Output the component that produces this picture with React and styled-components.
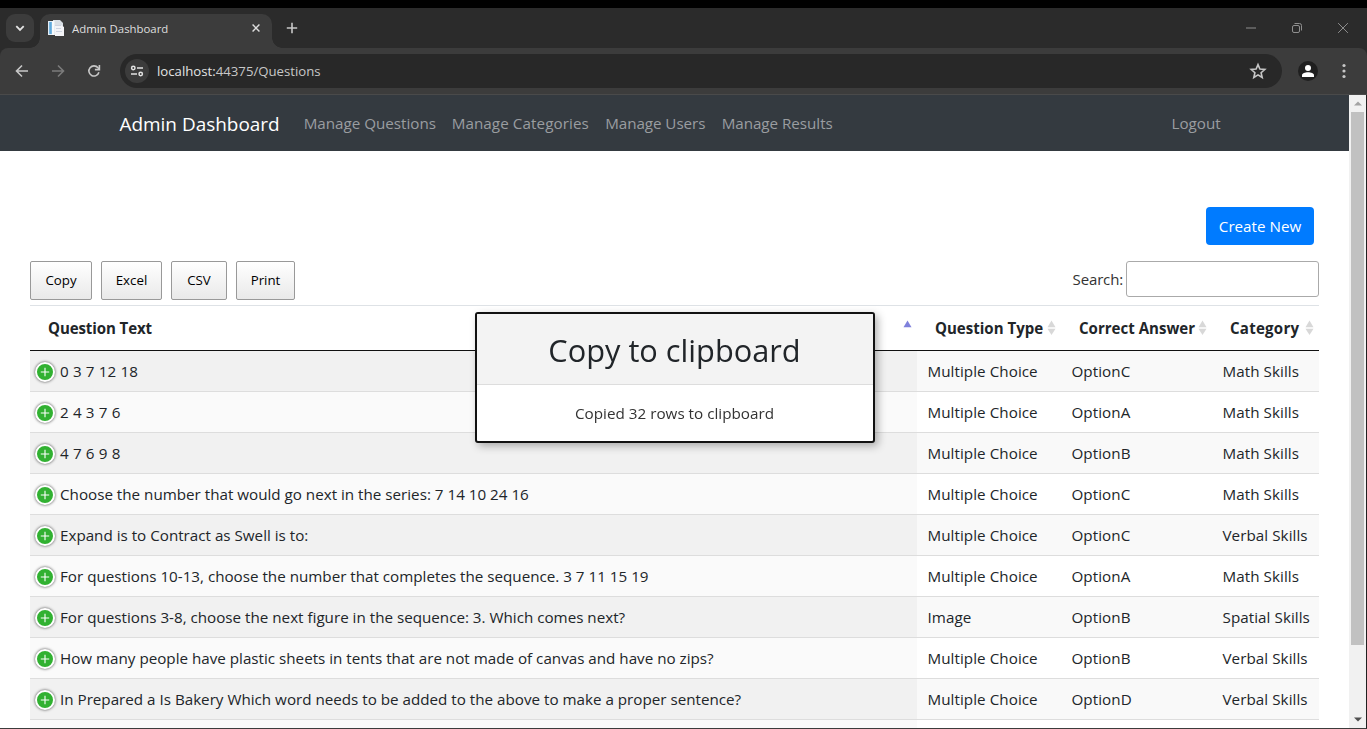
import React from "react";
import styled, { createGlobalStyle, css } from "styled-components";

const Global = createGlobalStyle`
  *, *::before, *::after { box-sizing: border-box; }
  html, body { margin: 0; height: 100%; overflow: hidden; background: #fff; }
  body { font-family: "Open Sans", "Noto Sans", sans-serif; font-size: 15.2px; color: #212529; }
`;

const Window = styled.div`
  width: 1367px;
  height: 729px;
  display: flex;
  flex-direction: column;
  overflow: hidden;
  background: #fff;
  border-top: 8px solid #000;
`;

/* ---------- browser chrome ---------- */

const TabStrip = styled.div`
  height: 40px;
  flex: none;
  display: flex;
  align-items: flex-end;
  background: #2b2b2b;
  padding-left: 6px;
`;

const TabSearch = styled.div`
  width: 28px;
  height: 28px;
  margin: 0 6px 6px 0;
  border-radius: 9px;
  background: #3c3c3c;
  display: grid;
  place-items: center;
`;

const Tab = styled.div`
  position: relative;
  width: 232px;
  height: 34px;
  display: flex;
  align-items: center;
  padding: 0 11px 6px 8px;
  border-radius: 10px 10px 0 0;
  background: #3c3c3c;
  color: #dedede;
  font-size: 11.4px;

  &::before, &::after {
    content: "";
    position: absolute;
    bottom: 0;
    width: 10px;
    height: 10px;
  }
  &::before { left: -10px; background: radial-gradient(circle at 0 0, transparent 9.5px, #3c3c3c 10px); }
  &::after { right: -10px; background: radial-gradient(circle at 100% 0, transparent 9.5px, #3c3c3c 10px); }
`;

const TabTitle = styled.span`
  flex: 1;
  margin-left: 8px;
  padding-top: 1px;
  line-height: 16px;
`;

const NewTab = styled.div`
  width: 28px;
  height: 28px;
  margin: 0 0 6px 6px;
  display: grid;
  place-items: center;
`;

const WindowControls = styled.div`
  margin-left: auto;
  display: flex;
  height: 40px;
  padding-right: 1px;
`;

const Control = styled.div`
  width: 46px;
  display: grid;
  place-items: center;
`;

const ToolbarBack = styled.div`
  flex: none;
  background: #2b2b2b;
`;

const Toolbar = styled.div`
  height: 47px;
  display: flex;
  align-items: center;
  background: #3c3c3c;
  border-bottom: 1px solid #4a4a4a;
  border-radius: 8px 8px 0 0;
  padding: 0 5px 0 4px;
`;

const ToolButton = styled.div`
  width: 36px;
  height: 34px;
  display: grid;
  place-items: center;
`;

const Omnibox = styled.div`
  flex: 1;
  height: 34px;
  margin: 0 8px 0 8px;
  padding: 0 12px 0 5px;
  display: flex;
  align-items: center;
  justify-content: space-between;
  border-radius: 17px;
  background: #282828;
`;

const Address = styled.div`
  display: flex;
  align-items: center;
  gap: 8px;
  font-size: 13.2px;
  line-height: 18px;
  color: #c7c7c7;
  b { font-weight: 400; color: #e3e3e3; }
`;

const SiteInfo = styled.span`
  width: 24px;
  height: 24px;
  border-radius: 50%;
  background: #3c3c3c;
  display: grid;
  place-items: center;
`;

const Avatar = styled.div`
  width: 20px;
  height: 20px;
  margin: 0 8px;
  border-radius: 50%;
  background: #1f1f1f;
  display: grid;
  place-items: center;
`;

/* ---------- page ---------- */

const Viewport = styled.div`
  flex: 1;
  min-height: 0;
  display: flex;
  border-right: 1px solid #202020;
  border-bottom: 1px solid #3c3c3c;
`;

const Page = styled.main`
  flex: 1;
  min-width: 0;
  overflow: hidden;
`;

const Navbar = styled.nav`
  height: 56px;
  display: flex;
  align-items: center;
  padding: 0 120.5px 0 119.5px;
  background: #343a40;
`;

const Brand = styled.a`
  margin-right: 16px;
  padding-top: 2px;
  font-size: 18.95px;
  color: #fff;
`;

const NavLink = styled.a`
  padding: 0 8px;
  color: #9a9da0;
  width: ${(p) => p.$width}px;
  letter-spacing: ${(p) => p.$track || 0}px;
  white-space: nowrap;
  ${(p) => p.$end && css`margin-left: auto;`}
`;

const Content = styled.section`
  padding: 56px 30px 0;
`;

const Actions = styled.div`
  display: flex;
  justify-content: flex-end;
  padding-right: 5px;
`;

const PrimaryButton = styled.button`
  width: 108px;
  height: 38px;
  padding: 0;
  border: 0;
  border-radius: 4px;
  background: #007bff;
  color: #fff;
  font: inherit;
`;

const TableTools = styled.div`
  display: flex;
  justify-content: space-between;
  align-items: flex-start;
  height: 44px;
  margin-top: 16px;
`;

const ExportButtons = styled.div`
  display: flex;
  gap: 9px;
`;

const ExportButton = styled.button`
  width: ${(p) => p.$width}px;
  height: 39px;
  padding: 0 0 1px;
  border: 1px solid #999;
  border-radius: 2px;
  background: linear-gradient(to bottom, #fff 0%, #e9e9e9 100%);
  color: #000;
  font-family: inherit;
  font-size: 13.3px;
`;

const Search = styled.label`
  display: flex;
  align-items: center;
  gap: 3px;
  color: #333;
  font-size: 15px;
  letter-spacing: -0.15px;
`;

const SearchInput = styled.input`
  width: 193px;
  height: 36px;
  border: 1px solid #aaa;
  border-radius: 3px;
  background: transparent;
`;

const Table = styled.table`
  width: 1289px;
  table-layout: fixed;
  border-collapse: separate;
  border-spacing: 0;
  border-top: 1px solid #dee2e6;
`;

const Col = styled.col`
  width: ${(p) => p.$width}px;
`;

const HeadCell = styled.th`
  height: 45px;
  padding: 0 0 0 18px;
  border-bottom: 1px solid #111;
  text-align: left;
  font-size: 15.05px;
  letter-spacing: ${(p) => p.$track || 0}px;
  white-space: nowrap;
`;

const HeadInner = styled.div`
  display: flex;
  align-items: center;
  justify-content: space-between;
  padding-right: 5px;
  line-height: 20px;
`;

const BodyRow = styled.tr`
  --plain: #fff;
  --sorted: #fafafa;
  &:nth-child(odd) {
    --plain: #f9f9f9;
    --sorted: #f1f1f1;
  }
`;

const Cell = styled.td`
  height: 41px;
  padding: 0 0 0 10.5px;
  border-bottom: 1px solid #ddd;
  background: var(--plain);
  line-height: 24px;
  letter-spacing: 0.06px;
  white-space: nowrap;
`;

const QuestionCell = styled(Cell)`
  padding-left: 5px;
  background: var(--sorted);
  letter-spacing: ${(p) => p.$track || 0}px;
`;

const Question = styled.div`
  display: flex;
  align-items: center;
  gap: 5px;
`;

const Expand = styled.span`
  width: 20px;
  height: 20px;
  margin-top: 1px;
  border: 2px solid #fff;
  border-radius: 50%;
  background: #31b131;
  box-shadow: 0 0 3px #444;
  display: grid;
  place-items: center;
`;

/* ---------- scroll bar ---------- */

const ScrollBar = styled.div`
  width: 17px;
  display: flex;
  flex-direction: column;
  align-items: center;
  background: #f1f1f1;
`;

const ScrollArrow = styled.div`
  height: 17px;
  display: grid;
  place-items: center;
`;

const ScrollThumb = styled.div`
  width: 13px;
  height: 533px;
  margin-bottom: auto;
  background: #c1c1c1;
`;

/* ---------- notice ---------- */

const Notice = styled.div`
  position: fixed;
  top: 312px;
  left: 475px;
  width: 400px;
  height: 131px;
  border: 2px solid #111;
  border-radius: 3px;
  background: #fff;
  box-shadow: 3px 3px 8px rgba(0, 0, 0, 0.3);
  text-align: center;
  overflow: hidden;
`;

const NoticeTitle = styled.h2`
  height: 71px;
  margin: 0;
  padding: 1px 1px 0 0;
  border-bottom: 1px solid #ddd;
  background: #f3f3f3;
  font-size: 30.75px;
  font-weight: 400;
  line-height: 70px;
`;

const NoticeText = styled.div`
  padding-right: 1px;
  font-size: 15.25px;
  line-height: 57px;
  color: #333;
`;

/* ---------- drawings ---------- */

const Stroke = ({ d, w = 16, color = "#c7c7c7", sw = 1.6 }) => (
  <svg width={w} height={w} viewBox="0 0 16 16" fill="none" stroke={color} strokeWidth={sw}>
    <path d={d} />
  </svg>
);

const Favicon = () => (
  <svg width="16" height="16" viewBox="0 0 16 16">
    <path d="M0 1h5v14H0z" fill="#e4eef6" />
    <path d="M1.200 2h2.600v12H1.200z" fill="#5fa9dc" />
    <path d="M5 0h7l3 3v12H5z" fill="#d9dfe5" />
    <path d="M4 1h2.500v14H4z" fill="#f7fafc" />
    <path d="M7 5h6l3 2v9H7z" fill="#f3f4f7" />
    <path d="M7 5.500h6M8 8.500h5M8 11.500h6" stroke="#cdd3e0" strokeWidth="1" />
  </svg>
);

const SortIcon = ({ active }) => (
  <svg width="9" height="16" viewBox="0 0 9 16">
    <path d="M4.5 0.5L8.5 7.3h-8z" fill={active ? "#7f81dc" : "#d8d8d8"} />
    {!active && <path d="M4.5 15L.5 8.7h8z" fill="#d8d8d8" />}
  </svg>
);

const Triangle = ({ down }) => (
  <svg width="8" height="5" viewBox="0 0 8 5">
    <path d={down ? "M0 .5h8L4 4.5z" : "M0 4.5h8L4 .5z"} fill={down ? "#505050" : "#a3a3a3"} />
  </svg>
);

/* ---------- data ---------- */

const NAV = [
  ["Manage Questions", 148, 0],
  ["Manage Categories", 153.5, 0.09],
  ["Manage Users", 116.5, -0.05],
  ["Manage Results", 127, -0.03],
];

const EXPORTS = [["Copy", 62], ["Excel", 61], ["CSV", 56], ["Print", 59]];

const HEADINGS = [
  ["Question Text", -0.1],
  ["Question Type", 0],
  ["Correct Answer", 0],
  ["Category", 0.25],
];

const ROWS = [
  ["0 3 7 12 18", "Multiple Choice", "OptionC", "Math Skills"],
  ["2 4 3 7 6", "Multiple Choice", "OptionA", "Math Skills"],
  ["4 7 6 9 8", "Multiple Choice", "OptionB", "Math Skills"],
  ["Choose the number that would go next in the series: 7 14 10 24 16", "Multiple Choice", "OptionC", "Math Skills"],
  ["Expand is to Contract as Swell is to:", "Multiple Choice", "OptionC", "Verbal Skills"],
  ["For questions 10-13, choose the number that completes the sequence. 3 7 11 15 19", "Multiple Choice", "OptionA", "Math Skills"],
  ["For questions 3-8, choose the next figure in the sequence: 3. Which comes next?", "Image", "OptionB", "Spatial Skills"],
  ["How many people have plastic sheets in tents that are not made of canvas and have no zips?", "Multiple Choice", "OptionB", "Verbal Skills"],
  ["In Prepared a Is Bakery Which word needs to be added to the above to make a proper sentence?", "Multiple Choice", "OptionD", "Verbal Skills"],
];

const isNumberSeries = (text) => /^[\d ]+$/.test(text);

const BrowserChrome = () => (
  <>
    <TabStrip>
      <TabSearch><Stroke d="M4.3 6.2L8 9.9l3.7-3.7" color="#e3e3e3" sw={1.8} /></TabSearch>
      <Tab>
        <Favicon />
        <TabTitle>Admin Dashboard</TabTitle>
        <Stroke w={10} d="M2.500 2.500l11 11M13.500 2.500l-11 11" color="#dedede" sw={2.3} />
      </Tab>
      <NewTab><Stroke d="M8 2.8v10.4M2.8 8h10.4" /></NewTab>
      <WindowControls>
        <Control><Stroke w={10} d="M0 8h16" color="#8f8f8f" /></Control>
        <Control>
          <svg width="12" height="12" viewBox="0 0 12 12" fill="none" stroke="#8f8f8f">
            <rect x="1.500" y="3.500" width="7" height="7" rx="1.5" />
            <path d="M3.500 1.500h5a2 2 0 0 1 2 2v5" />
          </svg>
        </Control>
        <Control><Stroke w={12} d="M1.5 1.5l13 13M14.5 1.5l-13 13" color="#8f8f8f" sw={1.3} /></Control>
      </WindowControls>
    </TabStrip>
    <ToolbarBack>
      <Toolbar>
        <ToolButton><Stroke d="M14 8H3M8 2.5L2.5 8 8 13.5" /></ToolButton>
        <ToolButton><Stroke d="M2 8h11M8 2.5L13.5 8 8 13.5" color="#7b7b7b" /></ToolButton>
        <ToolButton>
          <svg width="16" height="16" viewBox="0 0 16 16" fill="none" stroke="#c7c7c7" strokeWidth="1.6">
            <path d="M12.9 9.3A5.1 5.1 0 1 1 12 4.8L13.4 6.3" />
            <path d="M13.4 2v4.6H8.9" />
          </svg>
        </ToolButton>
        <Omnibox>
          <Address>
            <SiteInfo>
              <svg width="14" height="12" viewBox="0 0 14 12" fill="none" stroke="#e3e3e3" strokeWidth="1.5">
                <circle cx="3.3" cy="3" r="1.7" />
                <path d="M7 3h6M1 9h6" />
                <circle cx="10.7" cy="9" r="1.7" />
              </svg>
            </SiteInfo>
            <span><b>localhost:</b>44375/Questions</span>
          </Address>
          <svg width="24" height="18" viewBox="0 0 24 18" fill="none" stroke="#c7c7c7" strokeWidth="1.6">
            <path d="M12 2.6l1.9 4.5 4.9.4-3.7 3.2 1.1 4.8-4.2-2.6-4.2 2.6 1.1-4.8-3.7-3.2 4.9-.4z" />
          </svg>
        </Omnibox>
        <Avatar>
          <svg width="14" height="14" viewBox="0 0 14 14" fill="#fff">
            <circle cx="7" cy="4" r="3" />
            <path d="M1 13v-1.6C1 9.3 4 8.3 7 8.3s6 1 6 3.1V13z" />
          </svg>
        </Avatar>
        <ToolButton>
          <svg width="4" height="16" viewBox="0 0 4 16" fill="#c7c7c7">
            <circle cx="2" cy="2.5" r="1.6" />
            <circle cx="2" cy="8" r="1.6" />
            <circle cx="2" cy="13.5" r="1.6" />
          </svg>
        </ToolButton>
      </Toolbar>
    </ToolbarBack>
  </>
);

const QuestionsTable = () => (
  <Table>
    <colgroup>
      {[887, 144, 151, 107].map((w) => <Col key={w} $width={w} />)}
    </colgroup>
    <thead>
      <tr>
        {HEADINGS.map(([label, track], i) => (
          <HeadCell key={label} $track={track}>
            <HeadInner>{label}<SortIcon active={i === 0} /></HeadInner>
          </HeadCell>
        ))}
      </tr>
    </thead>
    <tbody>
      {ROWS.map(([question, type, answer, category]) => (
        <BodyRow key={question}>
          <QuestionCell $track={isNumberSeries(question) ? 0.14 : 0}>
            <Question>
              <Expand>
                <svg width="10" height="10" viewBox="0 0 10 10" stroke="#fff" strokeWidth="1.1">
                  <path d="M5 .8v8.4M.8 5h8.4" />
                </svg>
              </Expand>
              {question}
            </Question>
          </QuestionCell>
          <Cell>{type}</Cell>
          <Cell>{answer}</Cell>
          <Cell>{category}</Cell>
        </BodyRow>
      ))}
      <BodyRow>
        <QuestionCell />
        <Cell />
        <Cell />
        <Cell />
      </BodyRow>
    </tbody>
  </Table>
);

export default function App() {
  return (
    <Window>
      <Global />
      <BrowserChrome />
      <Viewport>
        <Page>
          <Navbar>
            <Brand>Admin Dashboard</Brand>
            {NAV.map(([label, width, track]) => (
              <NavLink key={label} $width={width} $track={track}>{label}</NavLink>
            ))}
            <NavLink $end $width={65}>Logout</NavLink>
          </Navbar>
          <Content>
            <Actions><PrimaryButton>Create New</PrimaryButton></Actions>
            <TableTools>
              <ExportButtons>
                {EXPORTS.map(([label, width]) => (
                  <ExportButton key={label} $width={width}>{label}</ExportButton>
                ))}
              </ExportButtons>
              <Search>Search:<SearchInput /></Search>
            </TableTools>
            <QuestionsTable />
          </Content>
        </Page>
        <ScrollBar>
          <ScrollArrow><Triangle /></ScrollArrow>
          <ScrollThumb />
          <ScrollArrow><Triangle down /></ScrollArrow>
        </ScrollBar>
      </Viewport>
      <Notice>
        <NoticeTitle>Copy to clipboard</NoticeTitle>
        <NoticeText>Copied 32 rows to clipboard</NoticeText>
      </Notice>
    </Window>
  );
}
